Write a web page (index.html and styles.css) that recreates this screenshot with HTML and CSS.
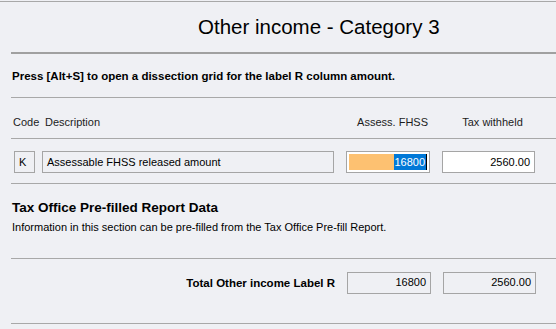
FILE: index.html
```html
<!DOCTYPE html>
<html>
	<head>
		<meta charset="UTF-8">
		<title>Other income - Category 3</title>
		<link rel="stylesheet" href="styles.css">
	</head>
	<body>
		<div class="top_rule"></div>
		<div class="page">
			<h1 class="title">Other income - Category 3</h1>
			<p class="note">Press [Alt+S] to open a dissection grid for the label R column amount.</p>
			<div class="row head">
				<span class="code">Code</span>
				<span class="desc">Description</span>
				<span class="amt">Assess. FHSS</span>
				<span class="tax">Tax withheld</span>
			</div>
			<div class="row entry">
				<span class="code box">K</span>
				<span class="desc box">Assessable FHSS released amount</span>
				<span class="amt box edit"><span class="fill"></span><span class="sel">16800</span></span>
				<span class="tax box white">2560.00</span>
			</div>
			<div class="prefill">
				<h2>Tax Office Pre-filled Report Data</h2>
				<p>Information in this section can be pre-filled from the Tax Office Pre-fill Report.</p>
			</div>
			<div class="row total">
				<span class="total_label">Total Other income Label R</span>
				<span class="amt box num">16800</span>
				<span class="tax box num">2560.00</span>
			</div>
		</div>
	</body>
</html>
```

FILE: styles.css
```css
*{
	padding: 0;
	margin: 0;
	box-sizing: border-box;
}
body{
	background: #eff0f4;
	font-family: "Liberation Sans", Arial, sans-serif;
	font-size: 11px;
	color: #000;
}
.top_rule{
	margin-top: 1px;
	border-top: 1px solid #a8a8a8;
}
.page{
	margin-left: 11px;
}
.title{
	height: 52px;
	padding-left: 187px;
	line-height: 50px;
	font-size: 20.5px;
	font-weight: normal;
	border-bottom: 2px solid #a0a0a0;
}
.note{
	height: 44px;
	line-height: 44px;
	padding-left: 1px;
	font-size: 11.5px;
	font-weight: bold;
	border-bottom: 1px solid #a8a8a8;
}
.row{
	display: flex;
	align-items: center;
	padding-left: 3px;
	border-bottom: 1px solid #a8a8a8;
}
.code{
	width: 21px;
}
.desc{
	width: 292px;
	margin-left: 7px;
}
.amt{
	width: 84px;
	margin-left: 12px;
}
.tax{
	width: 93px;
	margin-left: 12px;
}
.head{
	height: 41px;
	padding-top: 8px;
	color: #1c1c1c;
}
.head .code{
	margin-left: -1px;
	margin-right: 1px;
}
.head .desc{
	padding-left: 3px;
}
.head .amt{
	text-align: right;
	padding-right: 2px;
}
.head .tax{
	text-align: center;
	padding-left: 8px;
}
.entry{
	height: 45px;
	padding-top: 1px;
}
.box{
	height: 22px;
	line-height: 20px;
	border: 1px solid #a5a5a5;
	padding: 0 4px;
	white-space: nowrap;
}
.edit{
	display: flex;
	padding: 2px;
	background: #fff;
}
.fill{
	flex: 1;
	background: #fdc171;
}
.sel{
	line-height: 16px;
	padding-right: 1px;
	background: #0078d7;
	color: #fff;
	border-right: 1px solid #000;
}
.white{
	background: #fff;
	text-align: right;
}
.num{
	text-align: right;
	line-height: 19px;
}
.prefill{
	height: 75px;
	padding-top: 16px;
	padding-left: 1px;
	border-bottom: 1px solid #a8a8a8;
}
.prefill h2{
	font-size: 13.5px;
	line-height: 16px;
}
.prefill p{
	margin-top: 5px;
	line-height: 13px;
}
.total{
	height: 65px;
	align-items: flex-start;
	padding-top: 13px;
}
.total_label{
	width: 321px;
	line-height: 22px;
	font-size: 11.5px;
	text-align: right;
	font-weight: bold;
}
```
